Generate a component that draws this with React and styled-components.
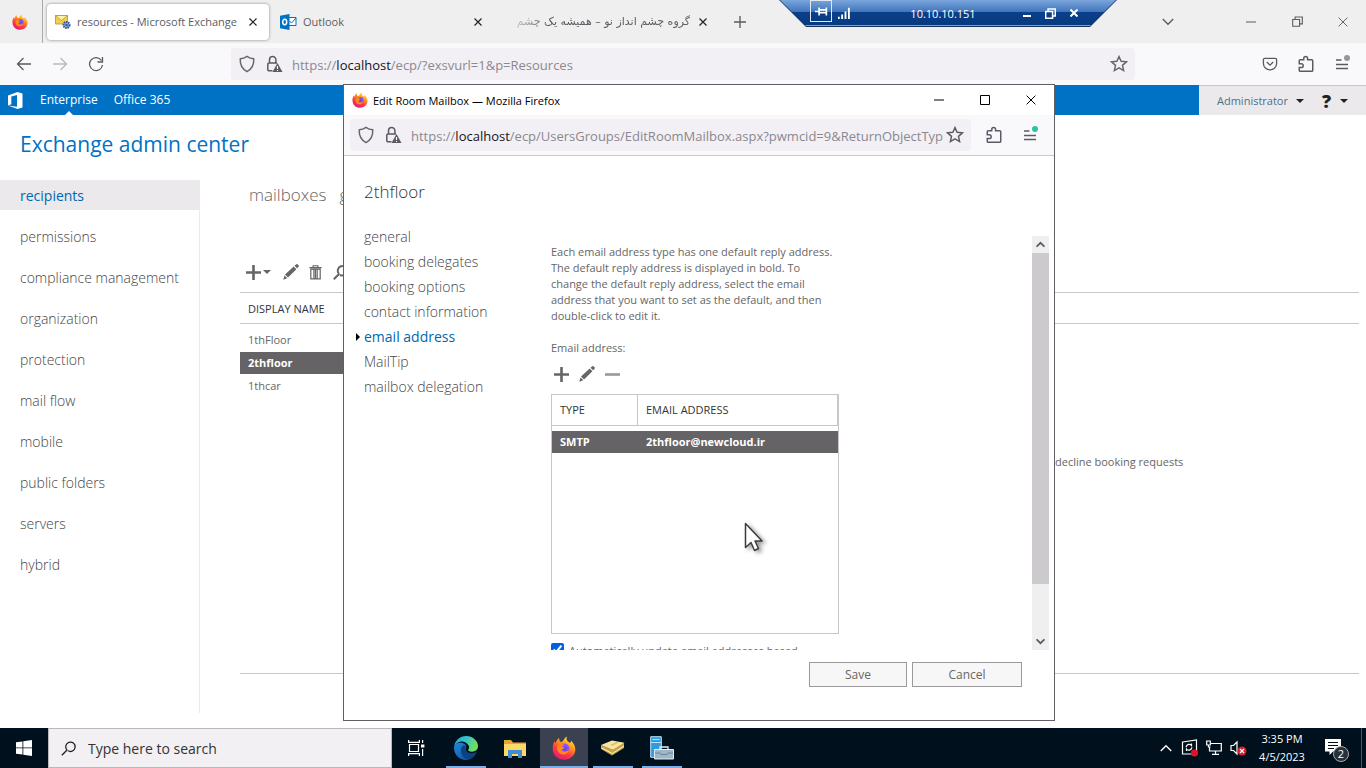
import styled, { createGlobalStyle, css } from 'styled-components';

const Colors = {
  white: '#fff',
  brand: '#0072c6',
  link: '#0067b0',
  text: '#666',
  dark: '#333',
  selected: '#666366',
  line: '#c8c6c8',
  chrome: '#f0eff0',
  toolbar: '#f9f8fb',
  field: '#f3f0f5',
  icon: '#5b5a62',
  taskbar: '#00101c',
};

const GlobalStyle = createGlobalStyle`
  * { box-sizing: border-box; }
  body {
    margin: 0;
    font-family: 'Open Sans', 'Noto Sans', sans-serif;
    font-size: 11px;
    color: ${Colors.text};
    background: ${Colors.white};
  }
  button { font: inherit; color: inherit; padding: 0; border: 0; background: none; }
  a { color: inherit; text-decoration: none; }
  ul { list-style: none; margin: 0; padding: 0; }
  h1, h2, p { margin: 0; font-weight: 400; }
  svg { display: block; flex: none; }
`;

const Row = styled.div`
  display: flex;
  align-items: center;
`;

const Desktop = styled.div`
  position: relative;
  display: flex;
  flex-direction: column;
  min-height: 100vh;
  overflow: hidden;
`;

const IconButton = styled.button`
  display: flex;
  align-items: center;
  justify-content: center;
  width: ${({ $w }) => $w || 36}px;
  height: ${({ $h }) => $h || 32}px;
  flex: none;
  color: ${({ $color }) => $color || Colors.icon};
`;

/* browser window */

const TabStrip = styled(Row)`
  height: 43px;
  background: ${Colors.chrome};
`;
const PinnedTab = styled(Row)`
  justify-content: center;
  align-self: stretch;
  width: 43px;
  padding-right: 2px;
  border-right: 1px solid #aaa8ac;
  margin-right: 4px;
`;
const Tabs = styled(Row)`
  gap: 3px;
`;
const Tab = styled(Row)`
  width: 222px;
  height: 36px;
  padding: 0 9px 0 8px;
  gap: 6px;
  border-radius: 4px;
  color: #5d5c62;
  ${({ $active }) =>
    $active &&
    css`
      background: ${Colors.white};
      box-shadow: 0 0 3px rgb(0 0 0 / 45%);
    `}
`;
const TabTitle = styled.span`
  flex: 1;
  overflow: hidden;
  white-space: nowrap;
  ${({ dir }) =>
    dir === 'rtl' &&
    css`
      font-family: 'DejaVu Sans', sans-serif;
      margin-left: 6px;
      mask-image: linear-gradient(to right, rgb(0 0 0 / 20%), #000 40px);
    `}
`;
const Spacer = styled.div`
  flex: 1;
`;
const Toolbar = styled(Row)`
  height: 42px;
  padding: 0 6px;
  background: ${Colors.toolbar};
`;
const UrlBar = styled(Row)`
  flex: 1;
  min-width: 0;
  height: 32px;
  padding: 0 7px;
  margin: ${({ $margin }) => $margin};
  border-radius: 4px;
  background: ${Colors.field};
`;
const UrlText = styled.div`
  flex: 1;
  min-width: 0;
  overflow: hidden;
  white-space: nowrap;
  padding-top: 1px;
  font-size: 13px;
  color: #8a8890;
  b {
    font-weight: 400;
    color: #15141a;
  }
`;

const RemoteBarEdge = styled.div`
  position: absolute;
  z-index: 5;
  top: 0;
  left: 779px;
  width: 338px;
  padding: 0 1px 1px;
  background: #16325f;
  clip-path: polygon(0 0, 100% 0, calc(100% - 27px) 100%, 27px 100%);
`;
const RemoteBar = styled(Row)`
  height: 26px;
  padding: 0 30px;
  color: ${Colors.white};
  background: linear-gradient(#7ba6dc, #3f74bb 12px, #0b3f8a 12px, #063a80 25px, #7f9fcd 25px);
  clip-path: polygon(0 0, 100% 0, calc(100% - 26px) 100%, 26px 100%);
`;
const PinButton = styled(IconButton)`
  align-self: flex-start;
  border: 1px solid #dfe8f5;
`;
const RemoteHost = styled.span`
  flex: 1;
  padding-left: 16px;
  text-align: center;
`;

/* exchange page */

const SuiteBar = styled(Row)`
  height: 30px;
  background: ${Colors.brand};
  color: ${Colors.white};
  font-size: 12px;
`;
const SuiteLogo = styled.a`
  width: 32px;
  padding-left: 8px;
`;
const SuiteLink = styled.a`
  position: relative;
  padding: 0 8px;
  line-height: 30px;
  ${({ $current }) =>
    $current &&
    css`
      &::after {
        content: '';
        position: absolute;
        bottom: 0;
        left: calc(50% - 4px);
        border: 4px solid transparent;
        border-top: 0;
        border-bottom-color: ${Colors.white};
      }
    `}
`;
const UserArea = styled(Row)`
  align-self: stretch;
  width: 167px;
  padding-left: 18px;
  gap: 8px;
  margin-left: auto;
  border-top: 1px solid #c9c6cb;
  background: #ebe9ec;
  color: #4f6f88;
  font-size: 11px;
`;
const Help = styled(Row)`
  margin-left: 10px;
  gap: 9px;
  color: #222;
  font-size: 18px;
  font-weight: 800;
`;

const Page = styled.div`
  flex: 1;
  display: flex;
  flex-direction: column;
  padding-bottom: 15px;
`;
const PageTitle = styled.h1`
  padding: 0 20px;
  line-height: 30px;
  margin: 14px 0 21px;
  font-size: 21px;
  color: ${Colors.brand};
`;
const PageBody = styled.div`
  flex: 1;
  display: flex;
`;
const SideNav = styled.ul`
  display: flex;
  flex-direction: column;
  gap: 11px;
  width: 200px;
  border-right: 1px solid #ebe9ec;
`;
const SideLink = styled.a`
  display: block;
  padding: 2px 20px 0;
  font-size: 14px;
  font-weight: ${({ $current }) => ($current ? 400 : 300)};
  line-height: 28px;
  color: ${({ $current }) => ($current ? Colors.link : '#444')};
  background: ${({ $current }) => ($current ? '#ebe9ec' : 'none')};
`;
const Main = styled.main`
  flex: 1;
  display: flex;
  flex-direction: column;
  margin: 0 7px 39px 40px;
  border-bottom: 1px solid ${Colors.line};
`;
const SectionTabs = styled(Row)`
  gap: 13px;
  padding-left: 9px;
  line-height: 30px;
  font-size: 17px;
  font-weight: 300;
`;
const Actions = styled(Row)`
  height: 40px;
  margin-top: 42px;
  padding-left: 4px;
`;
const MailboxTable = styled.table`
  width: 100%;
  border-collapse: collapse;
  th {
    height: 31px;
    padding: 0 8px;
    border: solid ${Colors.line};
    border-width: 1px 0;
    text-align: left;
    font-weight: 400;
    color: ${Colors.dark};
  }
`;
const ListArea = styled.div`
  flex: 1;
  display: flex;
  justify-content: space-between;
`;
const MailboxRows = styled.ul`
  display: flex;
  flex-direction: column;
  gap: 1px;
  width: 440px;
  padding-top: 5px;
`;
const MailboxRow = styled.li`
  padding: 0 8px;
  line-height: 22px;
  ${({ $selected }) =>
    $selected &&
    css`
      font-weight: 700;
      color: ${Colors.white};
      background: ${Colors.selected};
    `}
`;
const Details = styled.p`
  width: 304px;
  padding-top: 130px;
`;

/* popup window */

const Popup = styled.section`
  position: absolute;
  z-index: 3;
  top: 84px;
  left: 343px;
  width: 712px;
  border: 1px solid #625e66;
  background: ${Colors.white};
`;
const PopupTitle = styled(Row)`
  height: 30px;
  padding-left: 8px;
  gap: 5px;
  color: #000;
`;
const PopupToolbar = styled(Toolbar)`
  height: 41px;
  border-bottom: 1px solid #ccc9ce;
`;
const PopupBody = styled.div`
  display: flex;
  flex-direction: column;
  padding: 21px 5px 33px 20px;
`;
const PopupHeading = styled.h2`
  font-size: 17px;
  font-weight: 300;
  line-height: 30px;
  color: ${Colors.dark};
`;
const Columns = styled.div`
  display: flex;
  height: 426px;
  margin-top: 17px;
`;
const PopupNav = styled.ul`
  width: 187px;
`;
const PopupLink = styled.a`
  position: relative;
  display: block;
  font-size: 14px;
  line-height: 25px;
  font-weight: ${({ $current }) => ($current ? 400 : 300)};
  color: ${({ $current }) => ($current ? Colors.link : '#444')};
  ${({ $current }) =>
    $current &&
    css`
      &::before {
        content: '';
        position: absolute;
        left: -8px;
        top: 9px;
        border: 4px solid transparent;
        border-left-color: #000;
        border-right: 0;
      }
    `}
`;
const ScrollView = styled.div`
  flex: 1;
  display: flex;
  justify-content: space-between;
  margin-top: 12px;
  overflow: hidden;
`;
const Form = styled.div`
  width: 288px;
  padding-top: 8px;
  line-height: 16px;
`;
const Label = styled.p`
  margin-top: 16px;
`;
const FormActions = styled(Row)`
  height: 38px;
  margin: 0 0 0 -2px;
  padding-bottom: 2px;
`;
const AddressBox = styled.div`
  height: 240px;
  border: 1px solid ${Colors.line};
`;
const AddressTable = styled.table`
  width: 100%;
  border-spacing: 0;
  th,
  td {
    padding: 0 8px;
    text-align: left;
  }
  th {
    height: 31px;
    font-weight: 400;
    color: ${Colors.dark};
    border-bottom: 1px solid ${Colors.line};
    border-right: 1px solid ${Colors.line};
  }
  th:first-child {
    width: 86px;
  }
  tbody::before {
    content: '';
    display: block;
    height: 5px;
  }
  td {
    height: 22px;
    font-weight: 700;
    color: ${Colors.white};
    background: ${Colors.selected};
  }
`;
const CheckLabel = styled.label`
  display: flex;
  gap: 5px;
  margin-top: 9px;
  white-space: nowrap;
  input {
    width: 13px;
    height: 13px;
    margin: 0;
    accent-color: #0060df;
  }
`;
const ScrollBar = styled.div`
  display: flex;
  flex-direction: column;
  width: 17px;
  background: #f0eff0;
`;
const ScrollThumb = styled.div`
  height: 331px;
  background: #cccacc;
`;
const Footer = styled.div`
  display: flex;
  justify-content: flex-end;
  gap: 5px;
  margin: 12px 27px 0 0;
`;
const FooterButton = styled.button`
  width: ${({ $w }) => $w}px;
  height: 25px;
  border: 1px solid #9b999c;
  background: #f8f7f8;
  font-size: 12px;
`;
const Pointer = styled.svg`
  position: absolute;
  z-index: 6;
  top: 522px;
  left: 744px;
  filter: drop-shadow(3px 2px 2px rgb(0 0 0 / 40%));
`;

/* taskbar */

const Taskbar = styled(Row)`
  height: 40px;
  background: ${Colors.taskbar};
  color: ${Colors.white};
`;
const SearchBox = styled.label`
  display: flex;
  align-items: center;
  gap: 11px;
  width: 344px;
  height: 40px;
  padding-left: 12px;
  border: 1px solid #b9b7ba;
  background: #f2f0f2;
  color: #222;
  input {
    flex: 1;
    min-width: 0;
    padding: 0;
    border: 0;
    background: none;
    font: inherit;
    font-size: 14px;
  }
  input::placeholder {
    color: #333;
    opacity: 1;
  }
`;
const Tasks = styled(Row)`
  gap: 1px;
  margin-left: 2px;
`;
const TaskButton = styled(IconButton)`
  position: relative;
  background: ${({ $active }) => ($active ? '#3b4150' : 'none')};
  &::after {
    content: '';
    position: absolute;
    bottom: 0;
    left: ${({ $active }) => ($active ? 0 : 4)}px;
    right: ${({ $active }) => ($active ? 0 : 4)}px;
    height: 2px;
    background: ${({ $running }) => ($running ? '#76b0ea' : 'none')};
  }
`;
const Clock = styled.time`
  width: 64px;
  text-align: center;
  line-height: 18px;
`;
const Notice = styled.button`
  position: relative;
  width: 48px;
  height: 40px;
  display: flex;
  justify-content: center;
  padding: 11px 8px 0 0;
  margin-right: 4px;
  border-right: 1px solid #4d5660;
`;
const NoticeCount = styled.span`
  position: absolute;
  left: 19px;
  top: 18px;
  width: 16px;
  height: 16px;
  border: 1px solid #aaa;
  border-radius: 50%;
  background: #26313b;
  font-size: 11px;
  line-height: 14px;
`;

/* icons */

const Line = ({ d, size = 16, w = 1.3 }) => (
  <svg width={size} height={size} viewBox="0 0 16 16" fill="none" stroke="currentColor" strokeWidth={w}>
    <path d={d} />
  </svg>
);

const FirefoxLogo = ({ size = 16, id }) => (
  <svg width={size} height={size} viewBox="0 0 24 24">
    <defs>
      <linearGradient id={`${id}-flame`} x1="0.8" y1="0" x2="0.25" y2="1">
        <stop offset="0" stopColor="#fff44f" />
        <stop offset="0.35" stopColor="#ff9a1f" />
        <stop offset="0.65" stopColor="#ff3b3f" />
        <stop offset="1" stopColor="#e31587" />
      </linearGradient>
      <radialGradient id={`${id}-globe`}>
        <stop offset="0" stopColor="#6f3fd0" />
        <stop offset="1" stopColor="#9059ff" />
      </radialGradient>
    </defs>
    <path
      fill={`url(#${id}-flame)`}
      d="M15 0.5c-1 2.2-.3 4 1.500 5.500C20 8 18 5 19.500 5c2.500 3 4 5.600 3.800 9C22.800 20 18 23.700 12 23.700S.8 19.500.7 12.800C.6 9 1.700 6.500 3 5c0 1 .2 1.700.7 2.200C4.200 4.600 5.700 3 7.200 2c-.2 1.800.3 3 1.500 4.100C10.400 6 11 5 11.800 3.800 12.400 2.500 13.300 1.300 15 .5z"
    />
    <circle cx="12.500" cy="12.500" r="5" fill={`url(#${id}-globe)`} />
    <path
      fill="#ff8a16"
      d="M5.500 10c2-2.500 5-2.300 6.800-.6-1.500.1-2.300.7-2.500 1.400 1.200.6 2 .5 2.700.7-.6 1.600-2.400 1.300-3 2.600 1.200 2.300 5 2.400 7.300-.4-.3 3.500-3.800 5.500-7 4.600C5.800 17.200 4.500 13.200 5.500 10z"
    />
  </svg>
);

const ShieldIcon = () => (
  <Line size={18} d="M8 1.200c2 1.500 4 2.100 6 2.200.3 5-1.500 9-6 11.400C3.500 12.400 1.700 8.400 2 3.400c2-.1 4-.7 6-2.200z" />
);
const LockIcon = () => (
  <svg width="18" height="18" viewBox="0 0 18 18" fill="none" stroke="currentColor" strokeWidth="1.500">
    <path d="M4.500 8V4.800a3.200 3.200 0 0 1 6.400 0V8M7.500 15.800H4a1.200 1.200 0 0 1-1.200-1.200V9.200A1.200 1.200 0 0 1 4 8h8" />
    <path fill="currentColor" stroke="none" d="M12.500 8 17.500 17h-10z" />
    <path stroke="#fff" strokeWidth="1.200" d="M12.500 11v3M12.500 14.900V16" />
  </svg>
);
const StarIcon = () => (
  <Line size={18} d="m8 1.400 1.900 4.200 4.700.5-3.500 3.100 1 4.600L8 11.500l-4.100 2.300 1-4.600-3.500-3.100 4.700-.5z" />
);
const PuzzleIcon = () => (
  <Line
    size={18}
    d="M2 6.500V5.200A1 1 0 0 1 3 4.200h3V3a1.700 1.700 0 0 1 3.400 0v1.200h3.600a1 1 0 0 1 1 1v8.300a1 1 0 0 1-1 1H3a1 1 0 0 1-1-1v-2.300h1.800a1.700 1.700 0 0 0 0-3.400H2z"
  />
);
const MenuIcon = ({ dot }) => (
  <svg width="18" height="20" viewBox="0 0 18 20" fill="none" stroke="currentColor" strokeWidth="1.400">
    <path d="M3 6h5.500M3 10.500h12M3 14.500h12" />
    <circle cx="14" cy="4" r="3" fill={dot} stroke="none" />
  </svg>
);
const PocketIcon = () => (
  <Line d="M2.700 2.300h10.600a1.300 1.300 0 0 1 1.300 1.300v4A6.600 6.300 0 0 1 1.400 7.600v-4a1.300 1.300 0 0 1 1.300-1.300zM4.800 6 8 9.200 11.200 6" />
);
const CloseIcon = ({ size = 8, w = 2.4 }) => <Line size={size} w={w} d="M1 1l14 14M15 1 1 15" />;
const MinIcon = () => <Line size={10} w={1.6} d="M0 8h16" />;
const RestoreIcon = ({ w = 1.6 }) => <Line size={11} w={w} d="M1 5h10v10H1zM4.500 5V1.500H15v10h-4" />;
const MaxIcon = () => <Line size={10} w={1.6} d="M.8.8h14.400v14.400H.8z" />;
const Caret = ({ color = 'currentColor' }) => (
  <svg width="8" height="4" viewBox="0 0 8 4" fill={color}>
    <path d="M0 0h8L4 4z" />
  </svg>
);
const PlusIcon = () => <Line size={15} w={2.8} d="M8 0v16M0 8h16" />;
const PencilIcon = () => (
  <svg width="16" height="16" viewBox="0 0 16 16" fill="currentColor">
    <path d="M11.500 1.700 13 .4q1-.7 2 .3l.4.4q.9 1 0 1.900L14.100 4.300zM10.700 2.500 13.400 5.200 5 13.500 2 10.500zM1.500 11.500l2.800 2.800L.2 15.800z" />
  </svg>
);
const TrashIcon = () => (
  <Line size={15} d="M5.500 2V.8h5V2M1.500 2.800h13M3 4.500v10.300h10V4.500zM6.300 5v9M8 5v9M9.800 5v9" />
);
const SearchIcon = ({ w }) => <Line w={w} d="M6 10a4.700 4.700 0 1 1 1 .8M6.300 9.700.8 15.200" />;

const ExchangeIcon = () => (
  <svg width="16" height="16" viewBox="0 0 16 16">
    <path fill="#f3cf4e" stroke="#b5923a" strokeWidth=".8" d="M.5 1.500h12v8.500H.5z" />
    <path fill="#fff3a8" stroke="#b5923a" strokeWidth=".8" d="m.5 1.500 6 5 6-5z" />
    <circle cx="11.500" cy="11" r="3" fill="#9ab2dd" stroke="#34549a" strokeWidth="2" strokeDasharray="1.500 .7" />
    <circle cx="11.500" cy="11" r="1.200" fill="#34549a" />
  </svg>
);
const OutlookIcon = () => (
  <svg width="17" height="16" viewBox="0 0 17 16">
    <path fill="#fff" stroke="#0072c6" d="M8 3.500h8v8H8z" />
    <path fill="none" stroke="#0072c6" d="m9.500 7 2 2L16 4" />
    <path fill="#0072c6" d="M0 1.800 9.500 0v16L0 14.200z" />
    <ellipse cx="4.700" cy="8" rx="2" ry="2.700" fill="none" stroke="#fff" strokeWidth="1.500" />
  </svg>
);
const OfficeIcon = () => (
  <svg width="15" height="17" viewBox="0 0 15 17" fill="#fff">
    <path d="M0 3.500 9.500 0 14.500 1.500v14L9.500 17 0 13.600l9 1.200V3L3.300 4.400v7.800L0 13.600z" />
  </svg>
);
const WindowsIcon = () => (
  <svg width="16" height="16" viewBox="0 0 16 16" fill="#fff">
    <path d="M0 2.300 6.500 1.400v6.100H0zM7.300 1.300 16 0v7.500H7.300zM0 8.300h6.500v6.300L0 13.700zM7.300 8.300H16V16l-8.700-1.200z" />
  </svg>
);
const TaskViewIcon = () => (
  <svg width="17" height="16" viewBox="0 0 17 16" fill="none" stroke="#fff" strokeWidth="1.200">
    <path d="M1.500 4.500h9v7h-9zM.6 0v2.400h10.800V0M.6 16v-2.400h10.800V16M14.600 0v3M14.600 9v7" />
    <path fill="#fff" stroke="none" d="M13 4.500h3.400v3H13z" />
  </svg>
);
const EdgeIcon = () => (
  <svg width="24" height="24" viewBox="0 0 24 24">
    <defs>
      <linearGradient id="edge-wave" x1="0" y1="0" x2="1" y2=".3">
        <stop offset="0" stopColor="#1ca5dc" />
        <stop offset=".5" stopColor="#35c1d0" />
        <stop offset="1" stopColor="#70e05a" />
      </linearGradient>
      <linearGradient id="edge-sea" x1="0" y1="0" x2="1" y2="1">
        <stop offset="0" stopColor="#2189dd" />
        <stop offset="1" stopColor="#0b4a91" />
      </linearGradient>
    </defs>
    <path
      fill="url(#edge-sea)"
      d="M.1 11C1 7.500 5 6 8.500 7 12 8 13 10.500 11.700 12.500c-.4 2.700 2.300 5 5.800 5 2 0 3.600-.5 5-1.400C20.700 21 16.500 24 12 24 5 24-.5 18 .1 11z"
    />
    <path
      fill="#0a4285"
      d="M9 9.500c-2.500 2-3 7.500 0 11 1.500 1.800 4 3 6 3 3.500-1.200 6-4 7.500-7.400-4 2.500-9.800 1.700-10.900-2.500-.4-1.800.6-2.700-.2-4C10.700 9 9.800 9 9 9.500z"
    />
    <path
      fill="url(#edge-wave)"
      d="M.1 11C.8 4.500 6 0 12 0c7 0 12 5 12 10 0 3.700-2.700 5.700-6 5.700-3 0-4.200-1.200-3.800-2 1-1.200 1.300-2.600.4-4.300C12.800 6 9 5 6 5.700 3 6.400 1 8.500.1 11z"
    />
  </svg>
);
const FolderIcon = () => (
  <svg width="22" height="19" viewBox="0 0 22 19">
    <path fill="#e5a634" d="M0 1h7l2 2.500h13V17H0z" />
    <path fill="#ffd768" d="M0 5h22v12H0z" />
    <path fill="#3e8fd0" d="M4 11h14v8h-4v-4H8v4H4z" />
  </svg>
);
const ArchiveIcon = () => (
  <svg width="24" height="16" viewBox="0 0 24 16">
    <path fill="#c9a54a" d="M0 5v4l11 6.500L23 8V3L12 10z" />
    <path fill="#f7e5a0" d="M0 5 11 .5l12.500 2.300L12 10z" />
    <path fill="none" stroke="#fff3c4" d="m.5 8 11 5.500L23 6" />
    <path fill="#d9bd6a" d="m9 5 6.500-3 2.500.5-6.500 3.300z" />
  </svg>
);
const ServerIcon = () => (
  <svg width="24" height="24" viewBox="0 0 24 24">
    <path fill="#2f9ce0" stroke="#bfe2f7" d="M.7.700h10.600v20.600H.7z" />
    <path stroke="#bfe2f7" d="M2.500 3.500h7M.7 6.500h10.600" />
    <path fill="#9eb6c8" stroke="#e3edf4" d="M4.500 13.500h19v9.500h-19z" />
    <path fill="none" stroke="#e3edf4" strokeWidth="1.300" d="M10 13v-2h8v2" />
    <path fill="none" stroke="#6d8596" d="M5 17h5l1 1.500h6l1-1.500h5" />
  </svg>
);

const taskbarApps = [
  { name: 'Edge', icon: <EdgeIcon />, running: true },
  { name: 'File Explorer', icon: <FolderIcon /> },
  { name: 'Firefox', icon: <FirefoxLogo size={24} id="task" />, running: true, active: true },
  { name: 'Files', icon: <ArchiveIcon />, running: true },
  { name: 'Server Manager', icon: <ServerIcon />, running: true },
];
const sections = [
  'recipients',
  'permissions',
  'compliance management',
  'organization',
  'protection',
  'mail flow',
  'mobile',
  'public folders',
  'servers',
  'hybrid',
];
const popupSections = [
  'general',
  'booking delegates',
  'booking options',
  'contact information',
  'email address',
  'MailTip',
  'mailbox delegation',
];

const CloseTab = () => (
  <IconButton $w={14} $color="#222" aria-label="Close tab">
    <CloseIcon />
  </IconButton>
);

const BrowserChrome = () => (
  <header>
    <TabStrip>
      <PinnedTab>
        <FirefoxLogo id="view" />
      </PinnedTab>
      <Tabs>
        <Tab $active>
          <ExchangeIcon />
          <TabTitle>resources - Microsoft Exchange</TabTitle>
          <CloseTab />
        </Tab>
        <Tab>
          <OutlookIcon />
          <TabTitle>Outlook</TabTitle>
          <CloseTab />
        </Tab>
        <Tab>
          <TabTitle dir="rtl">گروه چشم انداز نو – همیشه یک چشم</TabTitle>
          <CloseTab />
        </Tab>
      </Tabs>
      <IconButton $w={42} aria-label="New tab">
        <Line size={12} w={1.8} d="M8 0v16M0 8h16" />
      </IconButton>
      <Spacer />
      <IconButton $w={120} aria-label="List all tabs">
        <Line size={12} w={1.8} d="m1 4 7 7 7-7" />
      </IconButton>
      <IconButton $w={46} aria-label="Minimize">
        <MinIcon />
      </IconButton>
      <IconButton $w={46} aria-label="Restore">
        <RestoreIcon />
      </IconButton>
      <IconButton $w={46} aria-label="Close">
        <CloseIcon size={10} w={1.5} />
      </IconButton>
    </TabStrip>
    <Toolbar>
      <IconButton aria-label="Back">
        <Line d="M15 8H1.500M7.500 2l-6 6 6 6" />
      </IconButton>
      <IconButton $color="#bbb9be" aria-label="Forward">
        <Line d="M1 8h13.500M8.500 2l6 6-6 6" />
      </IconButton>
      <IconButton aria-label="Reload">
        <Line d="M13.500 4.500A6.500 6.500 0 1 0 14.500 9M14.500 1v5h-5" />
      </IconButton>
      <UrlBar $margin="0 117px">
        <ShieldIcon />
        <IconButton $w={36} aria-label="Site information">
          <LockIcon />
        </IconButton>
        <UrlText>
          https://<b>localhost</b>/ecp/?exsvurl=1&amp;p=Resources
        </UrlText>
        <StarIcon />
      </UrlBar>
      <IconButton aria-label="Save to Pocket">
        <PocketIcon />
      </IconButton>
      <IconButton aria-label="Extensions">
        <PuzzleIcon />
      </IconButton>
      <IconButton aria-label="Menu">
        <MenuIcon dot="#98969b" />
      </IconButton>
    </Toolbar>
  </header>
);

const RemoteConnection = () => (
  <RemoteBarEdge>
    <RemoteBar>
      <PinButton $w={22} $h={22} $color="#fff" aria-label="Pin">
        <Line size={13} w={2} d="M0 8h5M5 3v10M14 3v10M5 6h9M5 9.500h9" />
      </PinButton>
      <IconButton $w={23} $color="#fff" aria-label="Connection">
        <Line size={12} w={2.5} d="M1 13v3M5.500 10v6M10 6v10M14.500 1v15" />
      </IconButton>
      <RemoteHost>10.10.10.151</RemoteHost>
      <IconButton $w={24} $color="#fff" aria-label="Minimize">
        <Line size={8} w={4} d="M0 14h16" />
      </IconButton>
      <IconButton $w={23} $color="#fff" aria-label="Restore">
        <RestoreIcon w={2.2} />
      </IconButton>
      <IconButton $w={24} $color="#fff" aria-label="Close">
        <CloseIcon w={4} />
      </IconButton>
    </RemoteBar>
  </RemoteBarEdge>
);

const ExchangePage = () => (
  <>
    <SuiteBar>
      <SuiteLogo href="#" aria-label="Office">
        <OfficeIcon />
      </SuiteLogo>
      <SuiteLink href="#" $current>
        Enterprise
      </SuiteLink>
      <SuiteLink href="#">Office 365</SuiteLink>
      <UserArea>
        <span>Administrator</span>
        <Caret color="#222" />
        <Help>
          ? <Caret />
        </Help>
      </UserArea>
    </SuiteBar>
    <Page>
      <PageTitle>Exchange admin center</PageTitle>
      <PageBody>
        <SideNav>
          {sections.map((name, i) => (
            <li key={name}>
              <SideLink href="#" $current={i === 0}>
                {name}
              </SideLink>
            </li>
          ))}
        </SideNav>
        <Main>
          <SectionTabs>
            <a href="#">mailboxes</a>
            <a href="#">groups</a>
          </SectionTabs>
          <Actions>
            <IconButton $w={19} $color="#666" aria-label="New">
              <PlusIcon />
            </IconButton>
            <Caret color="#666" />
            <IconButton $w={40} $color="#666" aria-label="Edit">
              <PencilIcon />
            </IconButton>
            <IconButton $w={9} $color="#666" aria-label="Delete">
              <TrashIcon />
            </IconButton>
            <IconButton $w={42} $color="#666" aria-label="Search">
              <SearchIcon w={2} />
            </IconButton>
          </Actions>
          <MailboxTable>
            <thead>
              <tr>
                <th>DISPLAY NAME</th>
              </tr>
            </thead>
          </MailboxTable>
          <ListArea>
            <MailboxRows>
              <MailboxRow>1thFloor</MailboxRow>
              <MailboxRow $selected>2thfloor</MailboxRow>
              <MailboxRow>1thcar</MailboxRow>
            </MailboxRows>
            <Details>decline booking requests</Details>
          </ListArea>
        </Main>
      </PageBody>
    </Page>
  </>
);

const EditMailbox = () => (
  <Popup>
    <PopupTitle>
      <FirefoxLogo id="popup" />
      <span>Edit Room Mailbox — Mozilla Firefox</span>
      <Spacer />
      <Row>
        <IconButton $w={46} $h={30} $color="#000" aria-label="Minimize">
          <MinIcon />
        </IconButton>
        <IconButton $w={46} $h={30} $color="#000" aria-label="Maximize">
          <MaxIcon />
        </IconButton>
        <IconButton $w={46} $h={30} $color="#000" aria-label="Close">
          <CloseIcon size={10} w={1.6} />
        </IconButton>
      </Row>
    </PopupTitle>
    <PopupToolbar>
      <UrlBar $margin="0 5px 0 0">
        <ShieldIcon />
        <IconButton $w={36} aria-label="Site information">
          <LockIcon />
        </IconButton>
        <UrlText>
          https://<b>localhost</b>/ecp/UsersGroups/EditRoomMailbox.aspx?pwmcid=9&amp;ReturnObjectTyp
        </UrlText>
        <IconButton $w={18} aria-label="Bookmark">
          <StarIcon />
        </IconButton>
      </UrlBar>
      <IconButton aria-label="Extensions">
        <PuzzleIcon />
      </IconButton>
      <IconButton aria-label="Menu">
        <MenuIcon dot="#2ac3a2" />
      </IconButton>
    </PopupToolbar>
    <PopupBody>
      <PopupHeading>2thfloor</PopupHeading>
      <Columns>
        <PopupNav>
          {popupSections.map(name => (
            <li key={name}>
              <PopupLink href="#" $current={name === 'email address'}>
                {name}
              </PopupLink>
            </li>
          ))}
        </PopupNav>
        <ScrollView>
          <Form>
            <p>
              Each email address type has one default reply address. The default reply address is displayed in bold. To
              change the default reply address, select the email address that you want to set as the default, and then
              double-click to edit it.
            </p>
            <Label>Email address:</Label>
            <FormActions>
              <IconButton $w={25} $color="#666" aria-label="Add">
                <PlusIcon />
              </IconButton>
              <IconButton $w={26} $color="#666" aria-label="Edit">
                <PencilIcon />
              </IconButton>
              <IconButton $w={25} $color="#999" aria-label="Remove">
                <Line size={15} w={2.8} d="M0 8h16" />
              </IconButton>
            </FormActions>
            <AddressBox>
              <AddressTable>
                <thead>
                  <tr>
                    <th>TYPE</th>
                    <th>EMAIL ADDRESS</th>
                  </tr>
                </thead>
                <tbody>
                  <tr>
                    <td>SMTP</td>
                    <td>2thfloor@newcloud.ir</td>
                  </tr>
                </tbody>
              </AddressTable>
            </AddressBox>
            <CheckLabel>
              <input type="checkbox" defaultChecked />
              Automatically update email addresses based
            </CheckLabel>
          </Form>
          <ScrollBar>
            <IconButton $w={17} $h={17} aria-label="Scroll up">
              <Line size={9} w={3} d="m1 12 7-7 7 7" />
            </IconButton>
            <ScrollThumb />
            <Spacer />
            <IconButton $w={17} $h={17} aria-label="Scroll down">
              <Line size={9} w={3} d="m1 4 7 7 7-7" />
            </IconButton>
          </ScrollBar>
        </ScrollView>
      </Columns>
      <Footer>
        <FooterButton $w={98}>Save</FooterButton>
        <FooterButton $w={110}>Cancel</FooterButton>
      </Footer>
    </PopupBody>
  </Popup>
);

const WindowsTaskbar = () => (
  <Taskbar>
    <IconButton $w={48} $h={40} aria-label="Start">
      <WindowsIcon />
    </IconButton>
    <SearchBox>
      <SearchIcon />
      <input type="text" placeholder="Type here to search" aria-label="Search" />
    </SearchBox>
    <IconButton $w={48} $h={40} aria-label="Task view">
      <TaskViewIcon />
    </IconButton>
    <Tasks>
      {taskbarApps.map(({ name, icon, running, active }) => (
        <TaskButton key={name} $w={48} $h={40} $running={running} $active={active} aria-label={name}>
          {icon}
        </TaskButton>
      ))}
    </Tasks>
    <Spacer />
    <IconButton $w={24} $color="#fff" aria-label="Show hidden icons">
      <Line size={12} w={1.8} d="m1 12 7-7 7 7" />
    </IconButton>
    <IconButton $w={24} $color="#fff" aria-label="Updates">
      <svg width="18" height="18" viewBox="0 0 18 18" fill="none" stroke="currentColor" strokeWidth="1.200">
        <path d="m1.500 3 14-2v14H1.500zM5 8c1-3 4-3.500 5.500-1.500V4.500M11 8.500c-1 3-4 3.500-5.500 1.500v2" />
        <circle cx="13.500" cy="14" r="3.500" fill="#e81123" stroke="none" />
      </svg>
    </IconButton>
    <IconButton $w={24} $color="#fff" aria-label="Network">
      <Line d="M5 3.500h10.300v7.500H3.500V7M9.500 11v3M6 14.300h7M.7 1h3.600v4H.7zM2.500 5v2h2" w={1.2} />
    </IconButton>
    <IconButton $w={24} $color="#fff" aria-label="Volume">
      <svg width="17" height="16" viewBox="0 0 17 16" fill="none" stroke="currentColor" strokeWidth="1.200">
        <path d="M1 5.500h2.500L7 2v12l-3.500-3.500H1z" />
        <circle cx="12" cy="11" r="4.500" fill="#d2202f" stroke="none" />
        <path d="m10 9 4 4M14 9l-4 4" />
      </svg>
    </IconButton>
    <Clock>
      3:35 PM
      <br />
      4/5/2023
    </Clock>
    <Notice aria-label="Notifications">
      <svg width="17" height="17" viewBox="0 0 17 17" fill="#fff">
        <path d="M0 0h16v12.500H8L4.500 16v-3.500H0z" />
        <path stroke={Colors.taskbar} d="M3 3.500h10M3 6.500h10M3 9.500h6" />
      </svg>
      <NoticeCount>2</NoticeCount>
    </Notice>
  </Taskbar>
);

export default function App() {
  return (
    <Desktop>
      <GlobalStyle />
      <BrowserChrome />
      <RemoteConnection />
      <ExchangePage />
      <EditMailbox />
      <Pointer width="20" height="32" viewBox="0 0 20 32">
        <path
          fill="#fff"
          stroke="#3d3b40"
          strokeWidth="1.500"
          strokeLinejoin="round"
          d="M1.500 1.500v24l5.500-5 3.500 8 4-2-3.500-7.500h7z"
        />
      </Pointer>
      <WindowsTaskbar />
    </Desktop>
  );
}
